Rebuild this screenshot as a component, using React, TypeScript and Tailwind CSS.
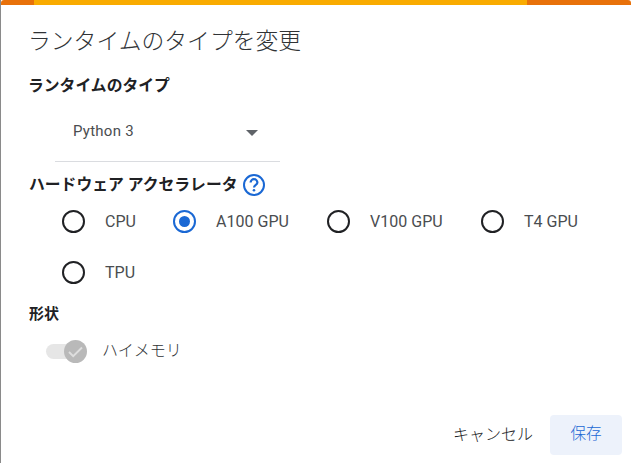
import React from "react";

function Radio({ label, checked, w }: { label: string; checked?: boolean; w: string }) {
  return (
    <div className={`flex items-center h-[51px] ${w}`}>
      <span className={`flex items-center justify-center w-[23px] h-[23px] rounded-full border-2 ${checked ? "border-[#1a68d4]" : "border-[#202124]"}`}>
        {checked && <span className="w-[11px] h-[11px] rounded-full bg-[#1a68d4]" />}
      </span>
      <span className="ml-[20px] text-[16px] text-[#4a4d50] tracking-[0.02px]">{label}</span>
    </div>
  );
}

export default function App() {
  return (
    <div className="relative w-[631px] h-[463px] overflow-hidden bg-white font-['Roboto','Noto_Sans_CJK_JP',sans-serif] border-l border-[#8a8a8a]">
      <div className="flex h-[5px]">
        <div className="w-[33px] rounded-tl-[3px] bg-[#e8710a]" />
        <div className="w-[493px] bg-[#f9ab00]" />
        <div className="flex-1 rounded-tr-[3px] bg-[#e8710a]" />
      </div>
      <div className="flex flex-col pl-[28px]">
        <h1 className="mt-[20px] -ml-px h-[34px] leading-[34px] text-[22.8px] font-light text-[#303336] whitespace-nowrap">ランタイムのタイプを変更</h1>
        <h2 className="mt-[16px] -ml-px h-[22px] leading-[22px] text-[15.8px] font-bold text-[#202124] whitespace-nowrap">ランタイムのタイプ</h2>
        <div className="ml-[26px] mt-[8px] w-[225px] h-[57px] flex items-center border-b border-[#dadce0] pl-[18px] relative">
          <span className="text-[15px] text-[#4a4d50] tracking-[0.25px] -mt-[3px]">Python 3</span>
          <span className="absolute left-[191px] top-[25px] w-0 h-0 border-l-[6px] border-r-[6px] border-t-[6px] border-l-transparent border-r-transparent border-t-[#5f6368]" />
        </div>
        <div className="mt-[10px] h-[25px] flex items-center gap-[4px]">
          <h2 className="text-[15.8px] font-bold text-[#202124] whitespace-nowrap">ハードウェア アクセラレータ</h2>
          <svg width="24" height="24" viewBox="0 0 24 24" className="shrink-0">
            <circle cx="12" cy="12" r="10" fill="none" stroke="#1a68d4" strokeWidth="2" />
            <path d="M8.6 9.6a3.4 3.4 0 0 1 6.8 0c0 2.3-3.4 2.4-3.4 5" fill="none" stroke="#1a68d4" strokeWidth="2.2" />
            <circle cx="12" cy="17.3" r="1.3" fill="#1a68d4" />
          </svg>
        </div>
        <div className="ml-[33px] -mt-[1px] flex flex-wrap w-[540px]">
          <Radio label="CPU" w="w-[111px]" />
          <Radio label="A100 GPU" checked w="w-[154px]" />
          <Radio label="V100 GPU" w="w-[154px]" />
          <Radio label="T4 GPU" w="w-[110px]" />
          <Radio label="TPU" w="w-[111px]" />
        </div>
        <h2 className="mt-[6px] h-[20px] leading-[20px] text-[15px] font-bold text-[#202124]">形状</h2>
        <div className="mt-[15px] ml-[17px] flex items-center h-[24px]">
          <div className="relative w-[41px] h-[23px] flex items-center">
            <div className="w-[36px] h-[15px] rounded-full bg-[#e6e6e6]" />
            <div className="absolute right-0 top-0 w-[23px] h-[23px] rounded-full bg-[#b9b9b9] flex items-center justify-center">
              <svg width="17" height="17" viewBox="0 0 17 17">
                <path d="M2 9l4.2 4.2L15 4.5" fill="none" stroke="#dedede" strokeWidth="1.9" />
              </svg>
            </div>
          </div>
          <span className="ml-[15px] text-[16px] font-light text-[#303336] whitespace-nowrap">ハイメモリ</span>
        </div>
        <div className="mt-[52px] mr-[9px] flex justify-end items-center">
          <button className="mr-[17px] text-[16px] font-light text-[#202124] whitespace-nowrap">キャンセル</button>
          <button className="w-[72px] h-[40px] rounded-[4px] bg-[#edf2fb] text-[15.6px] font-light text-[#1a68d4]">保存</button>
        </div>
      </div>
    </div>
  );
}
